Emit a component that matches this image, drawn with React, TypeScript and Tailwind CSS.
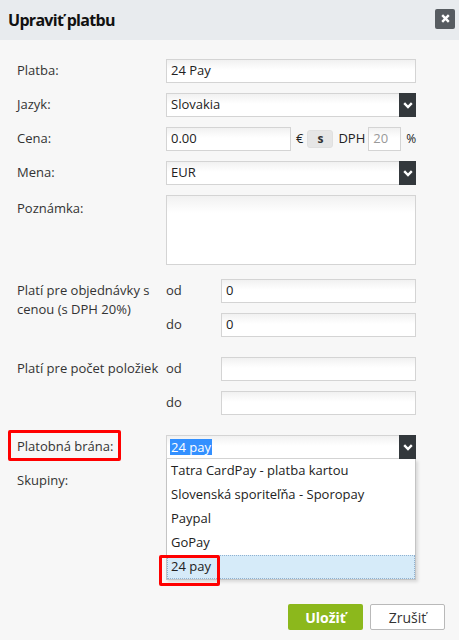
import React from "react";

const inputCls =
  "h-[24px] border border-[#d4d4d4] bg-linear-to-b from-[#f1f1f1] to-white to-[45%] px-[4px] flex items-center text-[13px] text-[#222]";

function Chevron() {
  return (
    <svg width="10" height="7" viewBox="0 0 10 7">
      <path d="M1.2 1.2 L5 5 L8.8 1.2" fill="none" stroke="white" strokeWidth="2.4" />
    </svg>
  );
}

function Select({ value, selected }: { value: string; selected?: boolean }) {
  return (
    <div className="h-[24px] w-[250px] border border-[#d4d4d4] bg-linear-to-b from-[#f1f1f1] to-white to-[45%] flex items-stretch">
      <div className="flex-1 flex items-center pl-[3px] text-[13px] text-[#222]">
        {selected ? (
          <span className="bg-[#3390ff] text-white leading-[16px] px-[1px]">{value}</span>
        ) : (
          <span className="pl-[1px]">{value}</span>
        )}
      </div>
      <div className="w-[17px] -my-px -mr-px bg-[#33383c] flex items-center justify-center">
        <Chevron />
      </div>
    </div>
  );
}

function Row({ label, children }: { label: string; children: React.ReactNode }) {
  return (
    <div className="flex items-center h-[24px] mb-[10px]">
      <div className="w-[149px]">{label}</div>
      {children}
    </div>
  );
}

function RangeGroup({ label, od, doo }: { label: string; od: string; doo: string }) {
  return (
    <div className="flex items-start mb-[20px]">
      <div className="w-[149px] pt-[2px] leading-[19px] pr-[4px]">{label}</div>
      <div className="flex flex-col gap-[10px]">
        <div className="flex items-center h-[24px]">
          <div className="w-[55px]">od</div>
          <div className={`${inputCls} w-[195px]`}>{od}</div>
        </div>
        <div className="flex items-center h-[24px]">
          <div className="w-[55px]">do</div>
          <div className={`${inputCls} w-[195px]`}>{doo}</div>
        </div>
      </div>
    </div>
  );
}

const gates = [
  "Tatra CardPay - platba kartou",
  "Slovenská sporiteľňa - Sporopay",
  "Paypal",
  "GoPay",
  "24 pay",
];

export default function App() {
  return (
    <div className="w-[459px] h-[640px] bg-[#f7f7f7] font-['Open_Sans',sans-serif] text-[13px] text-[#333] overflow-hidden">
      <div className="h-[40px] bg-[#e8ebee] flex items-center justify-between pl-[8px] pr-[4px]">
        <h1 className="text-[16px] font-bold text-[#111] leading-none tracking-[-0.7px]">Upraviť platbu</h1>
        <button className="w-[20px] h-[20px] rounded-[2px] bg-[#575c61] flex items-center justify-center -mt-[3px]">
          <svg width="9" height="9" viewBox="0 0 9 9">
            <path d="M1.2 1.2 L7.8 7.8 M7.8 1.2 L1.2 7.8" stroke="white" strokeWidth="2.4" />
          </svg>
        </button>
      </div>

      <div className="pt-[19px] pl-[17px] pr-[14px]">
        <Row label="Platba:">
          <div className={`${inputCls} w-[250px]`}>24 Pay</div>
        </Row>
        <Row label="Jazyk:">
          <Select value="Slovakia" />
        </Row>
        <Row label="Cena:">
          <div className={`${inputCls} w-[125px]`}>0.00</div>
          <span className="ml-[5px] text-[#222]">€</span>
          <span className="ml-[4px] w-[26px] h-[18px] rounded-[3px] bg-[#e6e6e6] border border-[#e0e0e0] flex items-center justify-center font-bold text-[12px] text-[#333]">
            s
          </span>
          <span className="ml-[5px] text-[#222]">DPH</span>
          <div className={`${inputCls} w-[33px] ml-[3px] text-[#999]!`}>20</div>
          <span className="ml-[5px] text-[#222] text-[12px]">%</span>
        </Row>
        <Row label="Mena:">
          <Select value="EUR" />
        </Row>
        <div className="flex items-start mb-[14px]">
          <div className="w-[149px] leading-[24px] pt-[1px]">Poznámka:</div>
          <div className="w-[250px] h-[70px] border border-[#d4d4d4] bg-linear-to-b from-[#f1f1f1] to-white to-[25%]" />
        </div>

        <RangeGroup label="Platí pre objednávky s cenou (s DPH 20%)" od="0" doo="0" />
        <RangeGroup label="Platí pre počet položiek" od="" doo="" />

        <div className="flex items-center h-[24px] mb-[10px]">
          <div className="w-[149px] relative">
            Platobná brána:
            <div className="absolute -left-[9px] -top-[7px] w-[113px] h-[31px] border-[3px] border-[#ff0000] rounded-[2px]" />
          </div>
          <div className="relative">
            <Select value="24 pay" selected />
            <ul className="absolute left-0 top-full w-[250px] z-10 bg-white border border-[#c4c4c4] border-t-0 shadow-[2px_2px_3px_rgba(0,0,0,0.12)] text-[#222]">
              {gates.map((g, i) => (
                <li
                  key={g}
                  className={
                    i === gates.length - 1
                      ? "relative h-[24px] flex items-center pl-[3px] bg-[#d6ebf9] border border-dotted border-[#8fb1d1]"
                      : "h-[24px] flex items-center pl-[4px]"
                  }
                >
                  {g}
                  {i === gates.length - 1 && (
                    <div className="absolute -left-[9px] -top-[1px] w-[61px] h-[31px] border-[3px] border-[#ff0000] rounded-[2px]" />
                  )}
                </li>
              ))}
            </ul>
          </div>
        </div>
        <div className="flex items-center h-[24px]">
          <div className="w-[149px]">Skupiny:</div>
        </div>

        <div className="flex justify-end gap-[7px] mt-[111px]">
          <button className="w-[75px] h-[26px] rounded-[2px] bg-[#8cb81c] text-white font-bold text-[14px]">
            Uložiť
          </button>
          <button className="w-[75px] h-[26px] rounded-[2px] bg-white border border-[#b9b9b9] text-[#333] text-[14px]">
            Zrušiť
          </button>
        </div>
      </div>
    </div>
  );
}
